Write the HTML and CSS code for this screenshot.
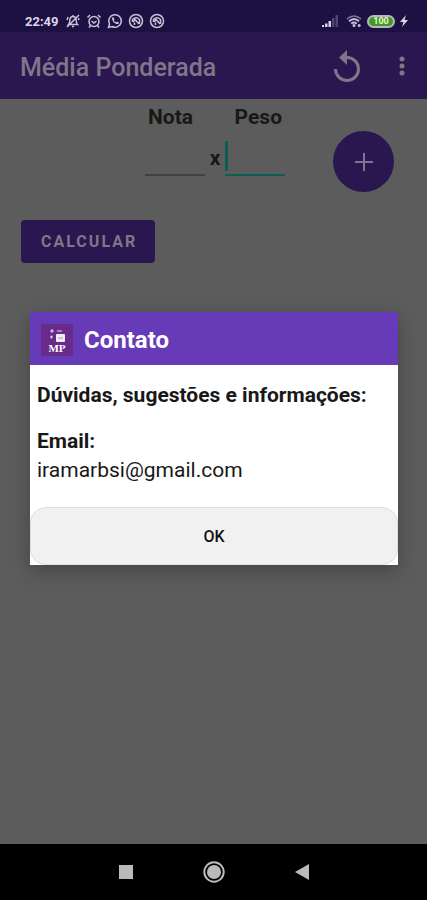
FILE: index.html
```html
<!DOCTYPE html>
<html lang="pt-BR">
<head>
<meta charset="utf-8">
<meta name="viewport" content="width=device-width, initial-scale=1">
<title>Média Ponderada</title>
<link rel="stylesheet" href="styles.css">
</head>
<body>
<div class="status">
  <div class="status-group">
    <span class="clock">22:49</span>
    <svg class="icon" viewBox="0 0 16 16"><path d="M3.5 11.5C5 10 4.500 8 5 6c.4-1.700 1.500-2.500 3-2.500S10.600 4.300 11 6c.5 2-.1 4 1.500 5.500zM7 13.500h2M8 2v1.500M2 14 14 2M2 7l1-3M14 7l-.7-2"/></svg>
    <svg class="icon" viewBox="0 0 16 16"><circle cx="8" cy="8.500" r="5"/><path d="M1.500 4.500 4 2M14.500 4.500 12 2M5.500 8 8 10l2.500-2M4.500 12.500 3 14.500M11.500 12.500l1.500 2"/></svg>
    <svg class="icon" viewBox="0 0 16 16"><path d="M1.500 14.500l1-3.500a6.300 6.300 0 1 1 2.500 2.500z"/><path class="solid" d="M5.200 4.500l1.300-.3 1 2-.8 1.100q.8 1.500 2.300 2.100l1-1 1.900 1-.3 1.400c-2.500 1.500-7.500-2.600-6.400-6.300z"/></svg>
    <svg class="icon" viewBox="0 0 16 16"><circle cx="8" cy="8" r="6.500"/><path d="M4.500 9V6.500Q8 3 11.500 6.500V11M5 9l2-2.500L11 11M6.500 12V9.500"/></svg>
    <svg class="icon" viewBox="0 0 16 16"><circle cx="8" cy="8" r="6.500"/><path d="M4.500 9V6.500Q8 3 11.500 6.500V11M5 9l2-2.500L11 11M6.500 12V9.500"/></svg>
  </div>
  <div class="status-group">
    <svg class="signal" viewBox="0 0 18 12"><path d="M1 10h2v2H1zM4 8.500h2.500V12H4zM7.500 6H10v6H7.500z"/><path class="faint" d="M11 3h2.500v9H11zM14.500 0H17v12h-2.500z"/></svg>
    <svg class="icon" viewBox="0 0 16 16"><path class="faint-line" d="M1 6q7-6 14 0"/><path class="wave" d="M3 8.300q5-4.500 10 0M5.300 10.700q2.700-2.400 5.400 0"/><circle class="solid" cx="8" cy="12.500" r="1.500"/><path d="M13 11v3M11.800 12.500h3"/></svg>
    <span class="battery">100</span>
    <svg class="bolt" viewBox="0 0 8 12"><path d="M6 0 0 7h3.500L2 12l6-7H4.500z"/></svg>
  </div>
</div>
<header class="appbar">
  <h1>Média Ponderada</h1>
  <button class="bar-button" aria-label="Reiniciar"><svg class="reset" viewBox="0 0 28 32"><path class="arc" d="M2.500 19A11.500 11.500 0 1 0 14 7.500h-1"/><path class="head" d="M14 0v15L6 7.500z"/></svg></button>
  <button class="bar-button more" aria-label="Mais opções"><svg class="dots" viewBox="0 0 6 20"><circle cx="3" cy="3" r="2.500"/><circle cx="3" cy="10" r="2.500"/><circle cx="3" cy="17" r="2.500"/></svg></button>
</header>
<main class="content">
  <div class="entry">
    <div class="fields">
      <label for="nota">Nota</label><label class="right" for="peso">Peso</label>
      <input id="nota" type="text"><span class="times">x</span><input class="focused" id="peso" type="text">
    </div>
    <button class="fab" aria-label="Adicionar"><svg viewBox="0 0 18 18"><path d="M9 0v18M0 9h18"/></svg></button>
  </div>
  <button class="calculate">CALCULAR</button>
</main>
<nav class="navbar">
  <button aria-label="Recentes"><svg viewBox="0 0 22 22"><path d="M4 4h14v14H4z"/></svg></button>
  <button aria-label="Início"><svg viewBox="0 0 22 22"><circle cx="11" cy="11" r="7"/><circle class="ring" cx="11" cy="11" r="9.700"/></svg></button>
  <button aria-label="Voltar"><svg viewBox="0 0 22 22"><path d="M4 11 18 3v16z"/></svg></button>
</nav>
<div class="overlay">
  <section class="dialog" role="dialog" aria-labelledby="dialog-title">
    <div class="dialog-head">
      <svg class="logo" viewBox="0 0 32 32"><rect class="logo-bg" width="32" height="32" rx="2"/><path class="logo-line" d="M9 7h4M11 5v4M16 7h5M9 13h3M10.500 11.500v3"/><rect class="logo-box" x="15" y="10" width="9" height="8" rx="1"/><path class="logo-dash" d="M17 14h5"/><text x="16" y="28" text-anchor="middle">MP</text></svg>
      <h2 id="dialog-title">Contato</h2>
    </div>
    <div class="dialog-body">
      <p class="strong">Dúvidas, sugestões e informações:</p>
      <p class="strong">Email:</p>
      <p class="address">iramarbsi@gmail.com</p>
    </div>
    <button class="ok">OK</button>
  </section>
</div>
</body>
</html>
```
FILE: styles.css
```css
* {
  box-sizing: border-box;
}

body {
  position: relative;
  display: flex;
  flex-direction: column;
  min-height: 100vh;
  margin: 0;
  background: #5c5c5c;
  color: #181818;
  font-family: Roboto, "Liberation Sans", sans-serif;
}

h1, h2, p {
  margin: 0;
  font-weight: 500;
}

button {
  padding: 0;
  border: 0;
  background: none;
  font-family: inherit;
}

svg {
  display: block;
}

.status {
  display: flex;
  align-items: center;
  justify-content: space-between;
  height: 32px;
  padding: 10px 19px 0 25px;
  background: #1d1143;
  color: #dcd6e6;
}

.status-group {
  display: flex;
  align-items: center;
  gap: 5px;
}

.clock {
  margin-right: 1px;
  font-size: 13px;
  font-weight: 700;
}

.icon {
  width: 16px;
  height: 16px;
  fill: none;
  stroke: #c9c2d6;
  stroke-width: 1.5;
}

.icon .solid {
  fill: #c9c2d6;
  stroke: none;
}

.icon .wave {
  stroke-width: 2;
}

.icon .faint-line {
  stroke: #82799a;
}

.signal {
  width: 18px;
  height: 12px;
  margin-right: 2px;
  fill: #dcd6e6;
}

.signal .faint {
  fill: #514570;
}

.battery {
  width: 28px;
  height: 13px;
  border: 2px solid #b9b5c2;
  border-radius: 7px;
  background: #419a20;
  color: #e8f4dc;
  font-size: 9px;
  font-weight: 700;
  line-height: 9px;
  text-align: center;
}

.bolt {
  width: 8px;
  height: 12px;
  fill: #dcd6e6;
}

.appbar {
  display: flex;
  align-items: center;
  height: 67px;
  padding: 4px 22px 0 20px;
  background: #2a174f;
  color: #7f7689;
}

.appbar h1 {
  flex: 1;
  font-size: 25px;
}

.bar-button {
  display: grid;
  place-items: center;
  padding-bottom: 4px;
}

.more {
  margin-left: 38px;
}

.reset {
  width: 28px;
  height: 32px;
}

.reset .arc {
  fill: none;
  stroke: #7f7689;
  stroke-width: 3;
}

.reset .head {
  fill: #7f7689;
}

.dots {
  width: 6px;
  height: 20px;
  fill: #7f7689;
}

.content {
  flex: 1;
  padding: 4px 33px 0 21px;
}

.entry {
  display: flex;
  align-items: flex-start;
  justify-content: flex-end;
  gap: 48px;
}

.fields {
  display: grid;
  grid-template-columns: 60px 20px 60px;
  align-items: center;
  font-size: 21px;
  font-weight: 700;
  text-align: center;
}

.fields label {
  justify-self: start;
  padding: 0 3px;
  line-height: 28px;
}

.fields .right {
  grid-column: 2 / 4;
  justify-self: end;
}

.fields input {
  width: 100%;
  height: 45px;
  padding: 0 6px;
  border: 0;
  border-bottom: 2px solid #424242;
  outline: 0;
  background: none;
  font: inherit;
}

.fields .focused {
  border-bottom-color: #0a5e54;
  background: linear-gradient(#0a5e54, #0a5e54) 0 10px / 3px 30px no-repeat;
}

.times {
  padding-top: 8px;
  line-height: 28px;
}

.fab {
  display: grid;
  place-items: center;
  width: 61px;
  height: 61px;
  margin-top: 28px;
  border-radius: 50%;
  background: #2a174f;
}

.fab svg {
  width: 18px;
  height: 18px;
  stroke: #7f7689;
  stroke-width: 2;
}

.calculate {
  height: 43px;
  margin-top: 28px;
  padding: 0 18px 0 20px;
  border-radius: 4px;
  background: #2a174f;
  color: #7f7689;
  font-size: 16px;
  font-weight: 700;
  letter-spacing: 2px;
}

.navbar {
  display: flex;
  justify-content: center;
  gap: 66px;
  height: 56px;
  background: #000;
}

.navbar svg {
  width: 22px;
  height: 22px;
  fill: #bababa;
}

.navbar .ring {
  fill: none;
  stroke: #bababa;
  stroke-width: 2;
}

.overlay {
  position: absolute;
  inset: 0;
  display: flex;
  align-items: center;
  padding: 32px 29px 56px 30px;
}

.dialog {
  flex: 1;
  background: #fff;
  box-shadow: 0 6px 18px #0004;
}

.dialog-head {
  display: flex;
  align-items: center;
  gap: 11px;
  height: 53px;
  padding: 3px 11px 0;
  background: #673ab7;
  color: #fff;
}

.dialog-head h2 {
  font-size: 24px;
  font-weight: 700;
}

.logo {
  width: 32px;
  height: 32px;
}

.logo-bg {
  fill: #682b8c;
}

.logo-line {
  stroke: #e5d9ee;
}

.logo-box {
  fill: #f2ebf5;
}

.logo-dash {
  stroke: #ad8abf;
}

.logo text {
  fill: #fff;
  font: 700 11px "Liberation Serif", serif;
}

.dialog-body {
  padding: 16px 7px 22px;
  font-size: 21px;
  line-height: 29px;
}

.dialog-body .strong {
  font-weight: 700;
}

.dialog-body .strong + .strong {
  margin-top: 17px;
}

.dialog-body .address {
  font-weight: 400;
}

.ok {
  display: block;
  width: 100%;
  height: 58px;
  padding-top: 2px;
  border: 1px solid #ddd;
  border-radius: 16px;
  background: #f1f1f1;
  color: #111;
  font-size: 16px;
  font-weight: 500;
}
```
